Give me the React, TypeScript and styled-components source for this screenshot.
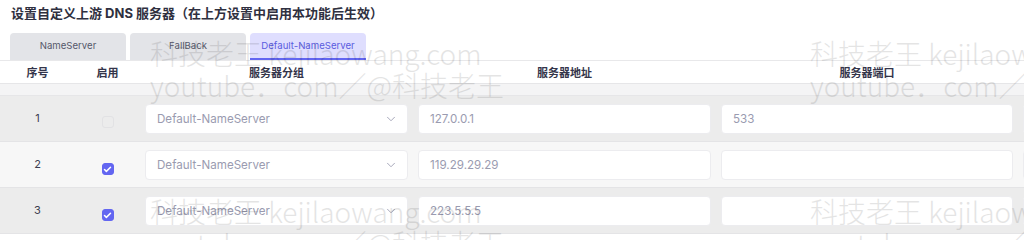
import React from 'react';
import styled, { createGlobalStyle } from 'styled-components';
import { ChevronDown, Check } from 'lucide-react';

const GlobalStyle = createGlobalStyle`
  body {
    margin: 0;
    background: #fff;
    font-family: Inter, "Noto Sans CJK SC", sans-serif;
    overflow: hidden;
  }
`;

const Page = styled.div`
  position: relative;
  width: 1024px;
  height: 240px;
  overflow: hidden;
`;

const Title = styled.h3`
  margin: 0;
  padding: 3px 11px 0;
  font-size: 13px;
  font-weight: 700;
  line-height: 20px;
  color: #2f3040;
`;

const TabBar = styled.div`
  display: flex;
  gap: 4px;
  padding: 10px 0 0 10px;
`;

const Tab = styled.div<{ $active?: boolean }>`
  flex: 0 0 116px;
  height: 27px;
  box-sizing: border-box;
  display: flex;
  align-items: center;
  justify-content: center;
  white-space: nowrap;
  border-radius: 4px 4px 0 0;
  font-size: 9.6px;
  background: ${(p) => (p.$active ? '#dfdefe' : '#e3e4e8')};
  color: ${(p) => (p.$active ? '#5a5ce0' : '#55586a')};
  border-bottom: 2px solid ${(p) => (p.$active ? '#6366f1' : 'transparent')};
`;

const Table = styled.table`
  width: 1330px;
  table-layout: fixed;
  border-collapse: collapse;
  border-top: 1px solid #e8e8ea;
`;

const HeadCell = styled.th<{ $w: number }>`
  width: ${(p) => p.$w}px;
  height: 22px;
  padding: 0;
  font-size: 11px;
  font-weight: 700;
  color: #34354a;
  background: #fff;
  border-bottom: 1px solid #e6e6e8;
  text-align: center;
`;

const GapRow = styled.tr`
  height: 12px;
  background: #f4f4f5;
  border-bottom: 1px solid #e6e6e8;
`;

const Row = styled.tr<{ $odd: boolean }>`
  height: 46px;
  background: ${(p) => (p.$odd ? '#ececec' : '#f7f7f7')};
  border-bottom: 1px solid #e4e4e6;
`;

const Cell = styled.td`
  padding: 0 5px;
  text-align: center;
  vertical-align: middle;
  font-size: 11px;
  color: #3c3d50;
`;

const NumCell = styled(Cell)`
  padding-bottom: 1px;
`;

const CheckCell = styled(Cell)`
  padding-top: 10px;
`;

const Box = styled.span<{ $checked: boolean }>`
  display: inline-flex;
  align-items: center;
  justify-content: center;
  width: 12px;
  height: 12px;
  border-radius: 3px;
  box-sizing: border-box;
  background: ${(p) => (p.$checked ? '#6366f1' : '#ececec')};
  border: 1px solid ${(p) => (p.$checked ? '#6366f1' : '#e2e2e4')};
  color: #fff;
`;

const Field = styled.div`
  display: flex;
  align-items: center;
  justify-content: space-between;
  height: 30px;
  box-sizing: border-box;
  padding: 0 9px 0 11px;
  background: #fff;
  border: 1px solid #ececef;
  border-radius: 4px;
  font-size: 11.6px;
  color: #9a9bb0;
  text-align: left;
`;

const Watermarks = styled.div`
  position: absolute;
  inset: 0;
  pointer-events: none;
`;

const Mark = styled.div<{ $x: number; $y: number }>`
  position: absolute;
  left: ${(p) => p.$x}px;
  top: ${(p) => p.$y}px;
  font-family: "Noto Sans CJK SC", sans-serif;
  font-weight: 300;
  font-size: 28px;
  line-height: 32px;
  color: #000;
  opacity: 0.1;
  white-space: nowrap;
`;

const rows = [
  { n: 1, on: false, addr: '127.0.0.1', port: '533' },
  { n: 2, on: true, addr: '119.29.29.29', port: '' },
  { n: 3, on: true, addr: '223.5.5.5', port: '' },
];

const marks = [
  { x: 150, y: 37 },
  { x: 810, y: 37 },
  { x: 150, y: 195 },
  { x: 810, y: 195 },
];

const App: React.FC = () => {
  return (
    <Page>
      <GlobalStyle />
      <Title>设置自定义上游 DNS 服务器（在上方设置中启用本功能后生效）</Title>
      <TabBar>
        <Tab>NameServer</Tab>
        <Tab>FallBack</Tab>
        <Tab $active>Default-NameServer</Tab>
      </TabBar>
      <Table>
        <thead>
          <tr>
            <HeadCell $w={75}>序号</HeadCell>
            <HeadCell $w={65}>启用</HeadCell>
            <HeadCell $w={273}>服务器分组</HeadCell>
            <HeadCell $w={303}>服务器地址</HeadCell>
            <HeadCell $w={302}>服务器端口</HeadCell>
            <HeadCell $w={312}>操作</HeadCell>
          </tr>
        </thead>
        <tbody>
          <GapRow>
            <td colSpan={6} />
          </GapRow>
          {rows.map((r) => (
            <Row key={r.n} $odd={r.n % 2 === 1}>
              <NumCell>{r.n}</NumCell>
              <CheckCell>
                <Box $checked={r.on}>{r.on && <Check size={9} strokeWidth={4} />}</Box>
              </CheckCell>
              <Cell>
                <Field>
                  Default-NameServer
                  <ChevronDown size={14} strokeWidth={1.5} color="#9a9bb0" />
                </Field>
              </Cell>
              <Cell>
                <Field>{r.addr}</Field>
              </Cell>
              <Cell>
                <Field>{r.port}</Field>
              </Cell>
              <Cell>
                <Field />
              </Cell>
            </Row>
          ))}
        </tbody>
      </Table>
      <Watermarks>
        {marks.map((m, i) => (
          <Mark key={i} $x={m.x} $y={m.y}>
            科技老王 kejilaowang.com
            <br />
            youtube．com／@科技老王
          </Mark>
        ))}
      </Watermarks>
    </Page>
  );
};

export default App;
